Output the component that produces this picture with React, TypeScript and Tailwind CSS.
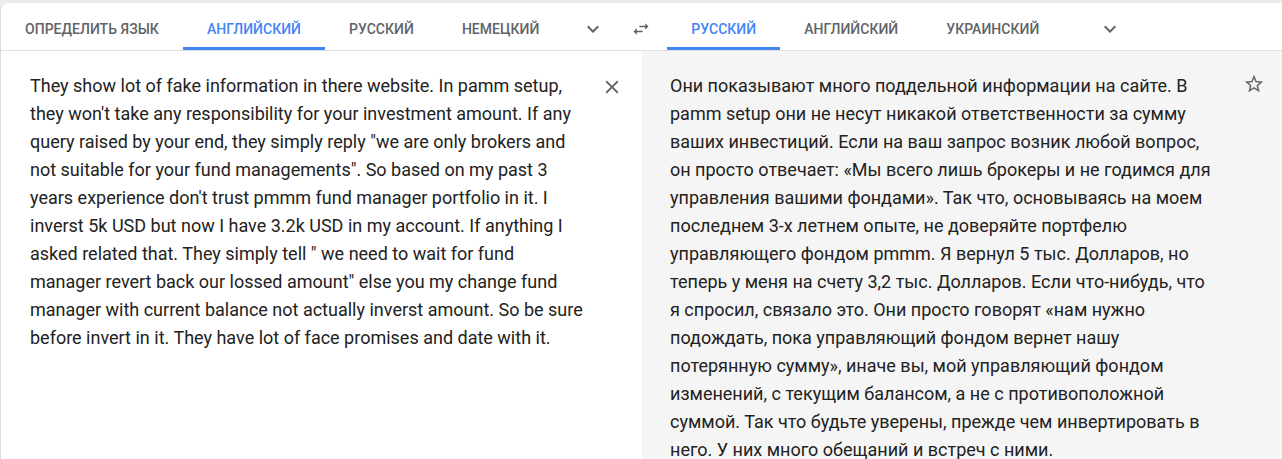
const srcLines = [
  'They show lot of fake information in there website. In pamm setup,',
  "they won't take any responsibility for your investment amount. If any",
  'query raised by your end, they simply reply "we are only brokers and',
  'not suitable for your fund managements". So based on my past 3',
  "years experience don't trust pmmm fund manager portfolio in it. I",
  'inverst 5k USD but now I have 3.2k USD in my account. If anything I',
  'asked related that. They simply tell " we need to wait for fund',
  'manager revert back our lossed amount" else you my change fund',
  'manager with current balance not actually inverst amount. So be sure',
  'before invert in it. They have lot of face promises and date with it.',
];

const outLines = [
  'Они показывают много поддельной информации на сайте. В',
  'pamm setup они не несут никакой ответственности за сумму',
  'ваших инвестиций. Если на ваш запрос возник любой вопрос,',
  'он просто отвечает: «Мы всего лишь брокеры и не годимся для',
  'управления вашими фондами». Так что, основываясь на моем',
  'последнем 3-х летнем опыте, не доверяйте портфелю',
  'управляющего фондом pmmm. Я вернул 5 тыс. Долларов, но',
  'теперь у меня на счету 3,2 тыс. Долларов. Если что-нибудь, что',
  'я спросил, связало это. Они просто говорят «нам нужно',
  'подождать, пока управляющий фондом вернет нашу',
  'потерянную сумму», иначе вы, мой управляющий фондом',
  'изменений, с текущим балансом, а не с противоположной',
  'суммой. Так что будьте уверены, прежде чем инвертировать в',
  'него. У них много обещаний и встреч с ними.',
];

function Tab({ label, active }: { label: string; active?: boolean }) {
  return (
    <div className="relative flex items-center px-6 h-full pt-[5px]">
      <span
        className={`text-[14px] font-medium uppercase tracking-[0.025px] ${
          active ? 'text-[#4285f4]' : 'text-[#5f6368]'
        }`}
      >
        {label}
      </span>
      {active && <div className="absolute left-0 right-0 bottom-0 h-[3px] bg-[#4285f4]" />}
    </div>
  );
}

function Chevron() {
  return (
    <svg width="24" height="24" viewBox="0 0 24 24" fill="#5f6368">
      <path d="M16.59 8.59L12 13.17 7.41 8.59 6 10l6 6 6-6z" />
    </svg>
  );
}

export default function App() {
  return (
    <div
      className="w-[1282px] h-[459px] overflow-hidden bg-[#ececec] pt-[3px]"
      style={{ fontFamily: 'Roboto, "Noto Sans", Arial, sans-serif' }}
    >
      <div className="h-full bg-white border-l border-[#dadce0] rounded-tl-lg flex flex-col">
        {/* language bar */}
        <div className="h-[48px] flex items-stretch border-b border-[#e0e0e0] shrink-0">
          <Tab label="Определить язык" />
          <Tab label="Английский" active />
          <Tab label="Русский" />
          <Tab label="Немецкий" />
          <div className="w-[60px] flex items-center justify-center pt-[5px]">
            <Chevron />
          </div>
          <div className="w-[36px] flex items-center justify-center pt-[4px]">
            <svg width="20" height="20" viewBox="0 0 24 24" fill="#5f6368">
              <path d="M6.99 11L3 15l3.99 4v-3H14v-2H6.99v-3zM21 9l-3.99-4v3H10v2h7.01v3L21 9z" />
            </svg>
          </div>
          <div className="w-[8px]" />
          <Tab label="Русский" active />
          <Tab label="Английский" />
          <Tab label="Украинский" />
          <div className="w-[94px] flex items-center justify-center pt-[5px]">
            <Chevron />
          </div>
        </div>

        {/* text panes */}
        <div className="flex flex-1 min-h-0">
          <div className="w-[641px] bg-white flex pl-[29px] pt-[21px]">
            <div className="flex-1 text-[18px] leading-[28px] text-[#222]">
              {srcLines.map((l, i) => (
                <div key={i} className="whitespace-nowrap">
                  {l}
                </div>
              ))}
            </div>
            <div className="w-[58px] flex justify-center pt-[4px] pr-[2px]">
              <svg width="22" height="22" viewBox="0 0 24 24" fill="#5f6368">
                <path d="M19 6.41L17.59 5 12 10.59 6.41 5 5 6.41 10.59 12 5 17.59 6.41 19 12 13.41 17.59 19 19 17.59 13.41 12z" />
              </svg>
            </div>
          </div>
          <div className="flex-1 bg-[#f5f5f5] flex pl-[28px] pt-[21px]">
            <div className="flex-1 text-[18px] leading-[28px] text-[#222]">
              {outLines.map((l, i) => (
                <div key={i} className="whitespace-nowrap">
                  {l}
                </div>
              ))}
            </div>
            <div className="w-[58px] flex justify-center pt-[1px] pl-[2px]">
              <svg width="22" height="22" viewBox="0 0 24 24" fill="#5f6368">
                <path d="M22 9.24l-7.19-.62L12 2 9.19 8.63 2 9.24l5.46 4.73L5.82 21 12 17.27 18.18 21l-1.63-7.03L22 9.24zM12 15.4l-3.76 2.27 1-4.28-3.32-2.88 4.38-.38L12 6.1l1.71 4.04 4.38.38-3.32 2.88 1 4.28L12 15.4z" />
              </svg>
            </div>
          </div>
        </div>
      </div>
    </div>
  );
}
